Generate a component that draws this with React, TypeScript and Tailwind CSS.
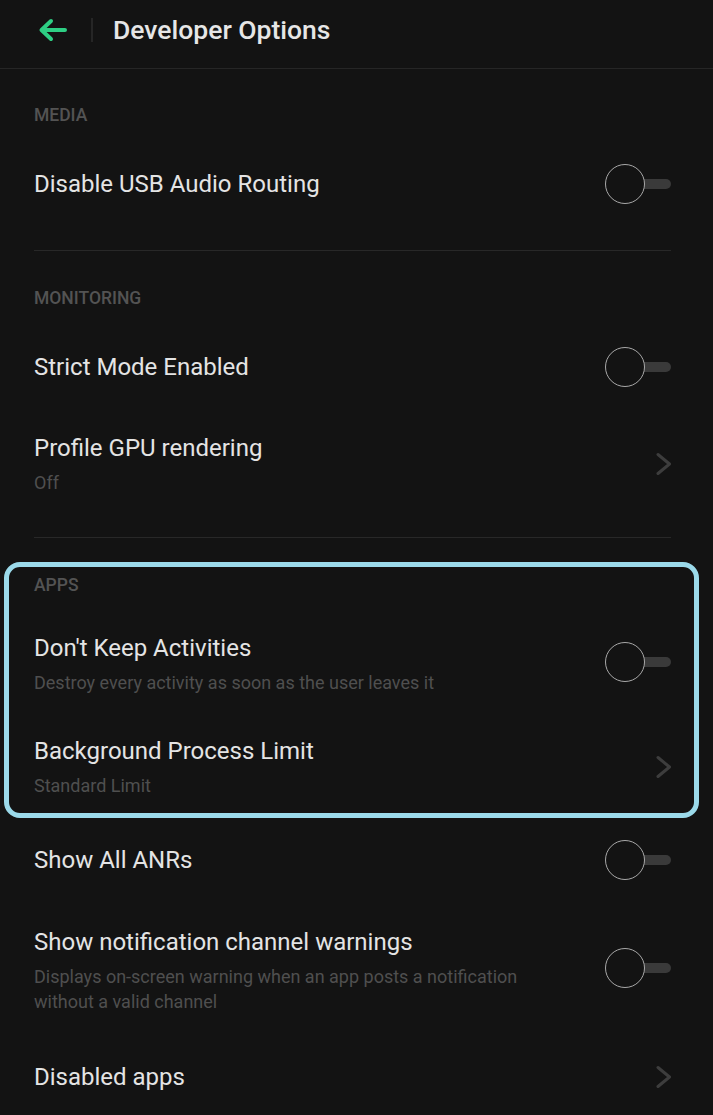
import { FC, ReactNode } from 'react';

const Toggle: FC<{ className?: string }> = ({ className = '' }) => (
  <div className={`relative w-[66px] h-[40px] shrink-0 ${className}`}>
    <div className="absolute right-0 top-[15px] w-[44px] h-[10px] rounded-full bg-[#3a3a3a]" />
    <div className="absolute left-0 top-0 w-[40px] h-[40px] rounded-full border-[1.5px] border-[#a9a9a9] bg-[#131313]" />
  </div>
);

const Chevron: FC = () => (
  <div className="w-[66px] flex justify-end shrink-0">
    <svg width="16" height="24" viewBox="0 0 16 24" fill="none">
      <path d="M3 2.5 L14.5 12 L3 21.5" stroke="#3d3d3d" strokeWidth="3" strokeLinecap="round" strokeLinejoin="round" />
    </svg>
  </div>
);

const SectionLabel: FC<{ children: ReactNode; className?: string }> = ({ children, className = '' }) => (
  <div className={`text-[17.5px] leading-[20px] font-medium text-[#535353] ${className}`}>{children}</div>
);

interface RowProps {
  title: string;
  subtitle?: ReactNode;
  action: 'toggle' | 'chevron';
  className?: string;
}

const Row: FC<RowProps> = ({ title, subtitle, action, className = '' }) => (
  <div className={`flex items-center justify-between ${className}`}>
    <div className="flex flex-col">
      <div className="text-[24px] leading-[28px] text-[#e4e4e4]">{title}</div>
      {subtitle && <div className="mt-[7.5px] text-[18px] leading-[25px] text-[#4f4f4f]">{subtitle}</div>}
    </div>
    {action === 'toggle' ? <Toggle className={subtitle ? '-mt-[5px]' : ''} /> : <Chevron />}
  </div>
);

const Divider: FC<{ className?: string }> = ({ className = '' }) => (
  <div className={`h-px bg-[#282828] ml-[34px] mr-[42px] ${className}`} />
);

export default function App() {
  return (
    <div
      className="w-[713px] h-[1115px] overflow-hidden bg-[#131313]"
      style={{ fontFamily: 'Roboto, "Noto Sans", sans-serif' }}
    >
      {/* top bar */}
      <header className="h-[69px] pb-[9px] flex items-center border-b border-[#262626]">
        <svg className="ml-[38px]" width="29" height="24" viewBox="0 0 29 24" fill="none">
          <path d="M27 12 H4 M13 3 L3.5 12 L13 21" stroke="#2ecf84" strokeWidth="4" strokeLinecap="round" strokeLinejoin="round" />
        </svg>
        <div className="ml-[24px] w-[2px] h-[24px] bg-[#262626]" />
        <h1 className="ml-[20px] text-[26.5px] leading-[30px] font-medium text-[#e6e6e6]">Developer Options</h1>
      </header>

      <div className="pl-[34px] pr-[42px]">
        <SectionLabel className="mt-[36px]">MEDIA</SectionLabel>
        <Row className="mt-[19px] h-[80px]" title="Disable USB Audio Routing" action="toggle" />
      </div>
      <Divider className="mt-[26px]" />

      <div className="pl-[34px] pr-[42px]">
        <SectionLabel className="mt-[37px]">MONITORING</SectionLabel>
        <Row className="mt-[19px] h-[80px]" title="Strict Mode Enabled" action="toggle" />
        <Row className="mt-[27px]" title="Profile GPU rendering" subtitle="Off" action="chevron" />
      </div>
      <Divider className="mt-[42.5px]" />

      {/* highlighted group */}
      <div className="mt-[24px] ml-[4px] mr-[14px] border-[5px] border-[#9bdaea] rounded-[16px] pl-[25px] pr-[23px] pb-[15.5px]">
        <SectionLabel className="mt-[8px]">APPS</SectionLabel>
        <Row
          className="mt-[39px]"
          title="Don't Keep Activities"
          subtitle="Destroy every activity as soon as the user leaves it"
          action="toggle"
        />
        <Row className="mt-[42.5px]" title="Background Process Limit" subtitle="Standard Limit" action="chevron" />
      </div>

      <div className="pl-[34px] pr-[42px]">
        <Row className="mt-[2px] h-[80px]" title="Show All ANRs" action="toggle" />
        <Row
          className="mt-[28px]"
          title="Show notification channel warnings"
          subtitle={
            <>
              Displays on-screen warning when an app posts a notification
              <br />
              without a valid channel
            </>
          }
          action="toggle"
        />
        <Row className="mt-[49.5px]" title="Disabled apps" action="chevron" />
      </div>
    </div>
  );
}
